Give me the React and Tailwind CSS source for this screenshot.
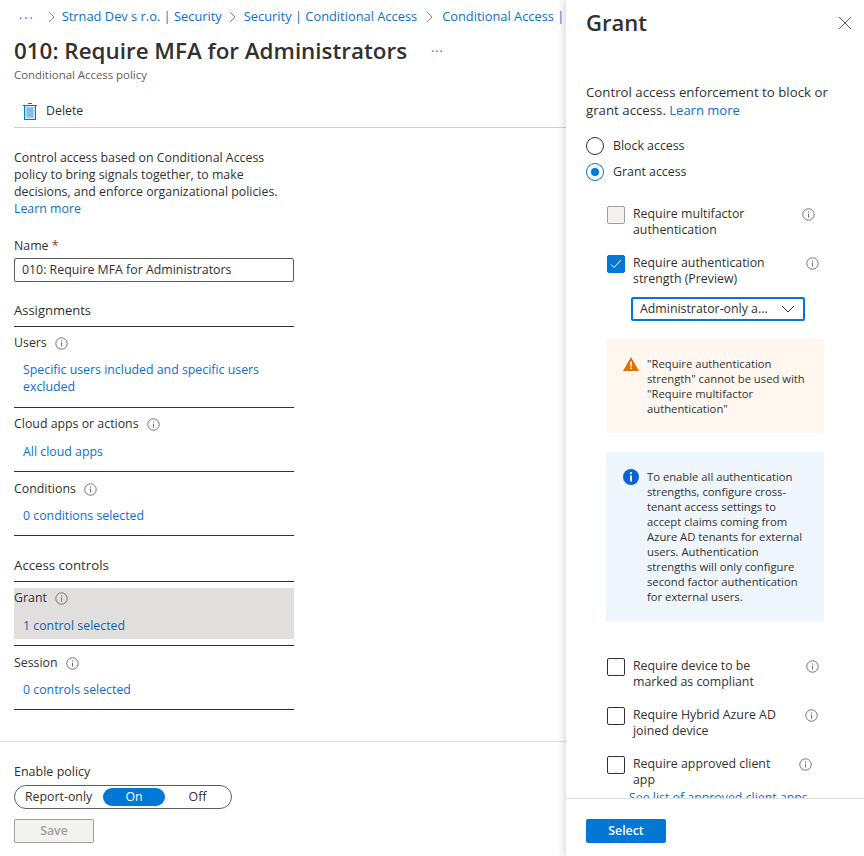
const font = { fontFamily: '"Open Sans", sans-serif' };

const InfoIcon = ({ className = "" }) => (
  <svg width="13" height="13" viewBox="0 0 13 13" fill="none" className={`shrink-0 ${className}`}>
    <circle cx="6.5" cy="6.5" r="5.7" stroke="#737373" strokeWidth="1" />
    <rect x="6" y="5.6" width="1" height="4" fill="#737373" />
    <rect x="6" y="3.4" width="1" height="1.2" fill="#737373" />
  </svg>
);

const Chevron = () => (
  <svg width="7" height="12" viewBox="0 0 7 12" fill="none" className="shrink-0">
    <path d="M1 1l5 5-5 5" stroke="#8a8886" strokeWidth="1" />
  </svg>
);

const Crumb = ({ children }) => <span className="text-[#0c6fcd] text-[12.85px] whitespace-nowrap">{children}</span>;

const Section = ({ label, children, pt = "pt-[7px]", gap = "mt-[10px]", pb = "pb-[12px]" }) => (
  <div className={`border-b border-[#323130] ${pt} ${pb}`}>
    <div className="flex items-center gap-[8px] h-[18px] text-[#323130]">
      {label}
      <InfoIcon />
    </div>
    <div className={`${gap} pl-[9px] text-[#0c6fcd] leading-[17px] w-[270px]`}>{children}</div>
  </div>
);

const Check = ({ state, label, mr }) => (
  <div className="flex items-start">
    <div
      className={`w-[18px] h-[18px] rounded-[2px] shrink-0 flex items-center justify-center border ${
        state === "checked"
          ? "bg-[#0078d4] border-[#0078d4]"
          : state === "disabled"
          ? "bg-[#f3f2f1] border-[#a19f9d]"
          : "bg-white border-[#323130]"
      }`}
    >
      {state === "checked" && (
        <svg width="12" height="10" viewBox="0 0 12 10" fill="none">
          <path d="M1 5.5l3 3 7-7.5" stroke="white" strokeWidth="1" />
        </svg>
      )}
    </div>
    <div className="ml-[8px] w-[150px] leading-[16px] text-[#323130]">{label}</div>
    <InfoIcon className={`mt-[2px] ${mr}`} />
  </div>
);

const Radio = ({ checked, label }) => (
  <div className="flex items-center h-[18px]">
    <div
      className={`w-[18px] h-[18px] rounded-full border flex items-center justify-center ${
        checked ? "border-[#0078d4]" : "border-[#323130]"
      }`}
    >
      {checked && <div className="w-[8px] h-[8px] rounded-full bg-[#0078d4]" />}
    </div>
    <span className="ml-[9px] text-[#323130]">{label}</span>
  </div>
);

export default function App() {
  return (
    <div className="relative w-[864px] h-[856px] overflow-hidden bg-white text-[12.35px]" style={font}>
      {/* policy blade */}
      <div className="w-[566px] h-[856px] flex flex-col">
        <div className="pl-[14px] flex-1">
          <div className="flex items-center h-[20px] mt-[7px] gap-[7px] pl-[5px] overflow-hidden">
            <span className="text-[#0c6fcd] tracking-[2px] mr-[6px] -mt-[4px]">...</span>
            <Chevron />
            <Crumb>Strnad Dev s r.o. | Security</Crumb>
            <Chevron />
            <span className="ml-[1px]"><Crumb>Security | Conditional Access</Crumb></span>
            <span className="ml-[2px]"><Chevron /></span>
            <span className="ml-[2px]"><Crumb>Conditional Access |</Crumb></span>
          </div>
          <div className="flex items-center mt-[9px] h-[30px]">
            <h1 className="text-[22.4px] font-semibold text-[#323130] whitespace-nowrap">
              010: Require MFA for Administrators
            </h1>
            <span className="ml-[24px] text-[#605e5c] tracking-[1px] -mt-[6px]">...</span>
          </div>
          <div className="text-[11.4px] text-[#605e5c] mt-[1px] h-[15px] leading-[15px]">Conditional Access policy</div>
          <div className="flex items-center h-[39px] mt-[7px] border-b border-[#d2d0ce] pt-[6px] pl-[9px]">
            <svg width="14" height="17" viewBox="0 0 14 17" fill="none">
              <rect x="1.5" y="2.5" width="11" height="14" fill="#cde6f7" stroke="#0078d4" />
              <rect x="3.5" y="4.5" width="7" height="10" fill="#83bdea" />
              <path d="M0 2.5h14M5 .5h4" stroke="#0078d4" />
            </svg>
            <span className="ml-[9px] text-[#323130]">Delete</span>
          </div>

          <div className="mt-[21px] w-[270px] leading-[17px] text-[#323130]">
            Control access based on Conditional Access policy to bring signals together, to make decisions, and enforce organizational policies.
            <br />
            <span className="text-[#0c6fcd]">Learn more</span>
          </div>

          <div className="mt-[20px] w-[280px]">
            <div className="h-[18px] leading-[18px] text-[#323130]">
              Name <span className="text-[#a4262c]">*</span>
            </div>
            <div className="mt-[3px] h-[24px] border border-[#605e5c] rounded-[2px] flex items-center pl-[7px] text-[#323130]">
              010: Require MFA for Administrators
            </div>

            <div className="mt-[19px] h-[26px] text-[#323130] border-b border-[#323130] text-[13px]">Assignments</div>
            <Section label="Users" gap="mt-[9px]" pb="pb-[12px]">
              Specific users included and specific users excluded
            </Section>
            <Section label="Cloud apps or actions" gap="mt-[10px]" pb="pb-[11px]">
              All cloud apps
            </Section>
            <Section label="Conditions" pt="pt-[8px]" gap="mt-[9px]" pb="pb-[11px]">
              0 conditions selected
            </Section>

            <div className="mt-[20px] h-[26px] text-[#323130] border-b border-[#323130] text-[13.25px]">Access controls</div>
            <div className="mt-[6px] pb-[6px] border-b border-[#323130]">
              <div className="bg-[#e1dfdd] h-[51px] pt-[1px]">
                <div className="flex items-center gap-[8px] h-[18px] text-[#323130]">
                  Grant
                  <InfoIcon />
                </div>
                <div className="mt-[10px] pl-[9px] text-[#0f5fb0] leading-[17px]">1 control selected</div>
              </div>
            </div>
            <Section label="Session" pt="pt-[8px]" gap="mt-[9px]" pb="pb-[11px]">
              0 controls selected
            </Section>
          </div>
        </div>

        <div className="border-t border-[#e1dfdd] h-[115px] pl-[14px] pt-[21px]">
          <div className="h-[18px] leading-[18px] text-[12.5px] text-[#323130]">Enable policy</div>
          <div className="mt-[4px] w-[218px] h-[24px] rounded-full border border-[#605e5c] flex items-center pl-[3px] text-[#323130]">
            <span className="w-[85px] pl-[7px] whitespace-nowrap">Report-only</span>
            <span className="w-[62px] h-[18px] leading-[18px] text-center rounded-full bg-[#0078d4] text-white">On</span>
            <span className="w-[65px] text-center">Off</span>
          </div>
          <div className="mt-[10px] w-[80px] h-[24px] border border-[#a19f9d] bg-[#f3f2f1] rounded-[2px] text-[#a19f9d] font-semibold flex items-center justify-center">
            Save
          </div>
        </div>
      </div>

      {/* grant panel */}
      <div className="absolute right-0 top-0 w-[298px] h-[856px] bg-white flex flex-col shadow-[-3px_0_6px_rgba(0,0,0,0.12)]">
        <div className="flex-1 overflow-hidden pl-[20px]">
          <div className="flex items-center justify-between h-[46px] pr-[12px]">
            <span className="text-[22px] font-semibold text-[#323130] -mt-[2px]">Grant</span>
            <svg width="14" height="14" viewBox="0 0 14 14" fill="none">
              <path d="M1 1l12 12M13 1L1 13" stroke="#605e5c" strokeWidth="1" />
            </svg>
          </div>
          <div className="mt-[37px] w-[260px] text-[13.25px] leading-[18px] text-[#323130]">
            Control access enforcement to block or grant access. <span className="text-[#0c6fcd] text-[13px]">Learn more</span>
          </div>
          <div className="mt-[18px] flex flex-col gap-[8px]">
            <Radio label="Block access" />
            <Radio checked label="Grant access" />
          </div>

          <div className="ml-[21px] mt-[25px]">
            <Check state="disabled" label="Require multifactor authentication" mr="ml-[19px]" />
            <div className="mt-[17px]">
              <Check state="checked" label="Require authentication strength (Preview)" mr="ml-[23px]" />
            </div>
            <div className="ml-[24px] mt-[10px] w-[174px] h-[24px] border-2 border-[#0078d4] rounded-[2px] flex items-center justify-between pl-[7px] pr-[8px] text-[#323130]">
              <span className="whitespace-nowrap">Administrator-only a...</span>
              <svg width="14" height="8" viewBox="0 0 14 8" fill="none">
                <path d="M1 1l6 6 6-6" stroke="#323130" strokeWidth="1" />
              </svg>
            </div>

            <div className="-ml-[1px] mt-[18px] w-[218px] h-[94px] bg-[#fff7f0] rounded-[2px] flex pt-[17px] pl-[17px] text-[11.25px] leading-[15px] text-[#323130]">
              <svg width="16" height="14" viewBox="0 0 16 14" className="shrink-0 mt-[1px]">
                <path d="M8 0l8 14H0z" fill="#e07000" />
                <rect x="7.2" y="4.5" width="1.6" height="5" fill="white" />
                <rect x="7.2" y="10.5" width="1.6" height="1.6" fill="white" />
              </svg>
              <div className="ml-[8px] w-[162px]">
                "Require authentication strength" cannot be used with "Require multifactor authentication"
              </div>
            </div>

            <div className="-ml-[1px] mt-[19px] w-[218px] h-[170px] bg-[#eff6fe] rounded-[2px] flex pt-[17px] pl-[17px] text-[11.25px] leading-[15px] text-[#323130]">
              <svg width="16" height="16" viewBox="0 0 16 16" className="shrink-0">
                <circle cx="8" cy="8" r="8" fill="#0b62d6" />
                <rect x="7.1" y="6.5" width="1.8" height="6" fill="white" />
                <circle cx="8" cy="4.2" r="1.1" fill="white" />
              </svg>
              <div className="ml-[8px] w-[162px]">
                To enable all authentication strengths, configure cross-tenant access settings to accept claims coming from Azure AD tenants for external users. Authentication strengths will only configure second factor authentication for external users.
              </div>
            </div>

            <div className="mt-[36px] flex flex-col gap-[17px]">
              <Check label="Require device to be marked as compliant" mr="ml-[23px]" />
              <Check label="Require Hybrid Azure AD joined device" mr="ml-[22px]" />
              <div>
                <Check label="Require approved client app" mr="ml-[16px]" />
                <div className="ml-[22px] mt-[2px] text-[#0c6fcd] leading-[16px] whitespace-nowrap">See list of approved client apps</div>
              </div>
            </div>
          </div>
        </div>
        <div className="border-t border-[#e1dfdd] h-[58px] shrink-0 pl-[20px] pt-[20px] bg-white">
          <div className="w-[80px] h-[24px] bg-[#0078d4] rounded-[2px] text-white font-semibold flex items-center justify-center">
            Select
          </div>
        </div>
      </div>
    </div>
  );
}
